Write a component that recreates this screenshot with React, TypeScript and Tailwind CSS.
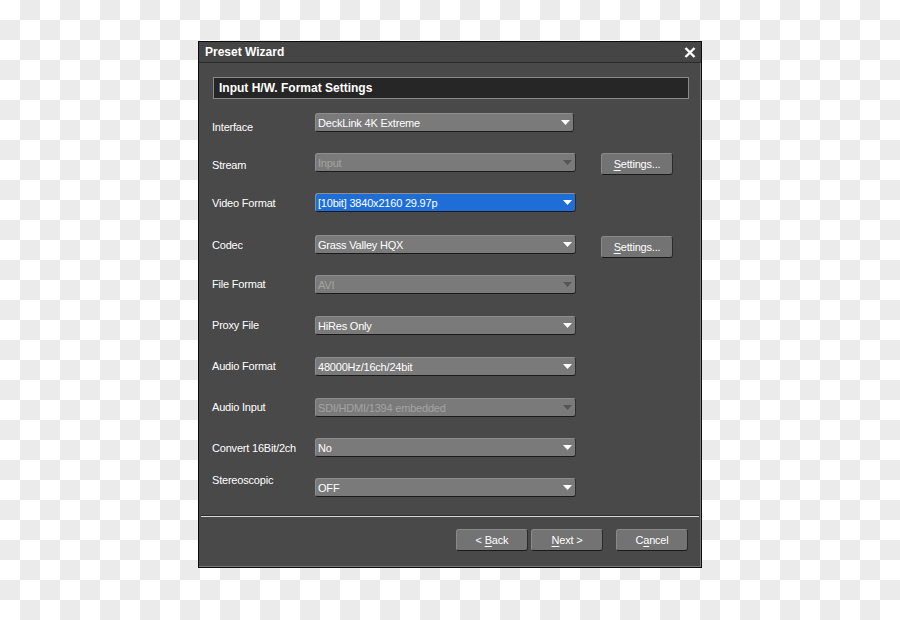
const font = { fontFamily: '"Liberation Sans", Arial, sans-serif' };

type Row = {
  label: string;
  value: string;
  rowClass: string;
  labelClass: string;
  selectClass: string;
  kind?: "disabled" | "active";
  settings?: string;
};

const rows: Row[] = [
  { label: "Interface", value: "DeckLink 4K Extreme", rowClass: "mt-[14px]", labelClass: "mt-[7px]", selectClass: "w-[259px]" },
  { label: "Stream", value: "Input", rowClass: "mt-[21px]", labelClass: "mt-[5px]", selectClass: "w-[261px]", kind: "disabled", settings: "mt-0" },
  { label: "Video Format", value: "[10bit] 3840x2160 29.97p", rowClass: "mt-[21px]", labelClass: "mt-[3px]", selectClass: "w-[261px]", kind: "active" },
  { label: "Codec", value: "Grass Valley HQX", rowClass: "mt-[23px]", labelClass: "mt-[3px]", selectClass: "w-[261px]", settings: "mt-px" },
  { label: "File Format", value: "AVI", rowClass: "mt-[21px]", labelClass: "mt-[2px]", selectClass: "w-[261px]", kind: "disabled" },
  { label: "Proxy File", value: "HiRes Only", rowClass: "mt-[22px]", labelClass: "mt-[2px]", selectClass: "w-[261px]" },
  { label: "Audio Format", value: "48000Hz/16ch/24bit", rowClass: "mt-[22px]", labelClass: "mt-[2px]", selectClass: "w-[261px]" },
  { label: "Audio Input", value: "SDI/HDMI/1394 embedded", rowClass: "mt-[22px]", labelClass: "mt-[2px]", selectClass: "w-[261px]", kind: "disabled" },
  { label: "Convert 16Bit/2ch", value: "No", rowClass: "mt-[21px]", labelClass: "mt-[3px]", selectClass: "w-[261px]" },
  { label: "Stereoscopic", value: "OFF", rowClass: "mt-[21px]", labelClass: "-mt-[5px]", selectClass: "w-[261px]" },
];

function Arrow({ disabled }: { disabled?: boolean }) {
  return (
    <svg width="9" height="5" viewBox="0 0 9 5" className="shrink-0">
      <polygon points="0,0 9,0 4.5,5" fill={disabled ? "#555555" : "#ffffff"} />
    </svg>
  );
}

function Select({ row }: { row: Row }) {
  const bg = row.kind === "active" ? "bg-[#1f6ed8]" : "bg-[#7a7a7a]";
  const text = row.kind === "disabled" ? "text-[#a3a3a3]" : "text-white";
  return (
    <div
      className={`${row.selectClass} ${bg} h-[19px] shrink-0 flex items-center justify-between pl-[2px] pr-[3px] rounded-[3px] border border-t-[#8e8e8e] border-l-[#8e8e8e] border-r-[#2e2e2e] border-b-[#1a1a1a]`}
    >
      <span className={`${text} text-[11px] leading-[14px] tracking-[-0.2px]`}>{row.value}</span>
      <Arrow disabled={row.kind === "disabled"} />
    </div>
  );
}

function Button({ pre, u, post, className = "" }: { pre: string; u: string; post: string; className?: string }) {
  return (
    <div
      className={`${className} w-[72px] h-[22px] flex items-center justify-center rounded-[3px] bg-[#737373] border border-t-[#8a8a8a] border-l-[#8a8a8a] border-r-[#2a2a2a] border-b-[#1a1a1a] text-white text-[11px] tracking-[-0.2px] whitespace-pre`}
    >
      <span>
        {pre}
        <span className="underline underline-offset-[2px]">{u}</span>
        {post}
      </span>
    </div>
  );
}

export default function App() {
  return (
    <div
      style={font}
      className="w-full h-[620px] flex justify-center pt-[41px] bg-[repeating-conic-gradient(#ebebeb_0_25%,#ffffff_0_50%)] bg-[length:40px_40px]"
    >
      <div className="w-[504px] h-[527px] border border-[#0c0c0c] bg-[#494949] flex flex-col shadow-[inset_-1px_-1px_0_#7a7a7a]">
        <div className="h-[21px] shrink-0 flex items-center justify-between pl-[6px] pr-[5px] bg-[#454545] border-b border-[#2c2c2c]">
          <span className="text-white text-[12px] font-bold leading-[14px]">Preset Wizard</span>
          <svg width="12" height="11" viewBox="0 0 12 11">
            <path d="M1.5 1 L10.5 10 M10.5 1 L1.5 10" stroke="#ffffff" strokeWidth="2.4" />
          </svg>
        </div>

        <div className="ml-[14px] mt-[14px] w-[476px] h-[22px] shrink-0 flex items-center pl-[5px] bg-[#262626] border border-[#8a8a8a]">
          <span className="text-white text-[12px] font-bold leading-[14px]">Input H/W. Format Settings</span>
        </div>

        <div className="flex flex-col pl-[13px]">
          {rows.map((row) => (
            <div key={row.label} className={`${row.rowClass} h-[19px] flex items-start`}>
              <span className={`${row.labelClass} w-[103px] shrink-0 text-white text-[11px] leading-[14px] tracking-[-0.2px]`}>
                {row.label}
              </span>
              <Select row={row} />
              {row.settings && (
                <Button pre="" u="S" post="ettings..." className={`${row.settings} ml-[25px] h-[21px]`} />
              )}
            </div>
          ))}
        </div>

        <div className="mt-auto mx-[2px] h-[2px] shrink-0 border-t border-[#2e2e2e] border-b border-b-[#d8d8d8]" />
        <div className="h-[50px] shrink-0 flex items-start justify-end pt-[12px] pr-[13px]">
          <Button pre="< " u="B" post="ack" />
          <Button pre="" u="N" post="ext >" className="ml-[3px]" />
          <Button pre="C" u="a" post="ncel" className="ml-[13px]" />
        </div>
      </div>
    </div>
  );
}
